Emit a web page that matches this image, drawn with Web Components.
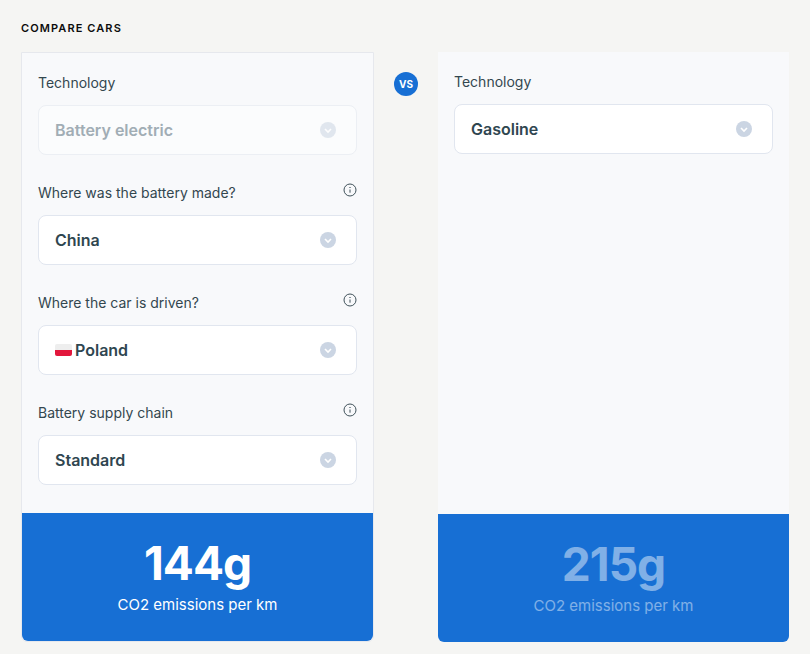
<!DOCTYPE html>
<html>
<head>
<meta charset="utf-8">
<title>Compare cars</title>
<style>
  html, body { margin: 0; background: #f5f5f3; }
  body { font-family: Inter, "Noto Sans", sans-serif; color: #2f4650; }
</style>
</head>
<body>
<compare-cars heading="COMPARE CARS">
  <car-card slot="left" bordered value="144g">
    <car-field label="Technology" value="Battery electric" disabled></car-field>
    <car-field label="Where was the battery made?" value="China" info></car-field>
    <car-field label="Where the car is driven?" value="Poland" info flag></car-field>
    <car-field label="Battery supply chain" value="Standard" info></car-field>
  </car-card>
  <car-card slot="right" value="215g" dim>
    <car-field label="Technology" value="Gasoline"></car-field>
  </car-card>
</compare-cars>

<script>
class CompareCars extends HTMLElement {
  constructor() {
    super();
    const template = document.createElement('template');
    template.innerHTML = `
      <style>
        :host { display: block; padding: 21px 21px 12px; }
        h2 {
          margin: 0 0 17px;
          font-size: 11px;
          line-height: 14px;
          font-weight: 600;
          letter-spacing: 1.1px;
          color: #0c0c0c;
        }
        .row { display: grid; grid-template-columns: 353px 64px 351px; height: 590px; }
        .mid { display: flex; justify-content: center; padding-top: 20px; }
        .vs {
          width: 24px;
          height: 24px;
          border-radius: 50%;
          background: #176fd4;
          color: #fff;
          font-size: 10px;
          font-weight: 700;
          line-height: 24px;
          text-align: center;
        }
      </style>
      <h2></h2>
      <div class="row">
        <slot name="left"></slot>
        <div class="mid"><div class="vs">VS</div></div>
        <slot name="right"></slot>
      </div>`;
    this.attachShadow({ mode: 'open' });
    this.shadowRoot.appendChild(template.content.cloneNode(true));
    this.shadowRoot.querySelector('h2').textContent = this.getAttribute('heading');
  }
}

class CarCard extends HTMLElement {
  constructor() {
    super();
    const template = document.createElement('template');
    template.innerHTML = `
      <style>
        :host {
          display: flex;
          flex-direction: column;
          box-sizing: border-box;
          background: #f8f9fb;
          border-radius: 0 0 6px 6px;
        }
        :host([bordered]) { border: 1px solid #e6e8ed; }
        .fields {
          flex: 1;
          display: flex;
          flex-direction: column;
          gap: 28px;
          padding: 20px 16px 0;
        }
        .result {
          height: 128px;
          box-sizing: border-box;
          padding-top: 22px;
          background: #176fd4;
          border-radius: 0 0 6px 6px;
          color: #fff;
          text-align: center;
        }
        :host([dim]) .result > div { opacity: .45; }
        .value { font-size: 46px; line-height: 56px; font-weight: 700; letter-spacing: -1px; }
        .caption { font-size: 15px; line-height: 20px; margin-top: 4px; }
      </style>
      <div class="fields"><slot></slot></div>
      <div class="result">
        <div class="value"></div>
        <div class="caption">CO2 emissions per km</div>
      </div>`;
    this.attachShadow({ mode: 'open' });
    this.shadowRoot.appendChild(template.content.cloneNode(true));
    this.shadowRoot.querySelector('.value').textContent = this.getAttribute('value');
  }
}

class CarField extends HTMLElement {
  constructor() {
    super();
    const template = document.createElement('template');
    template.innerHTML = `
      <style>
        :host { display: block; }
        .head { display: flex; justify-content: space-between; height: 20px; margin-bottom: 12px; }
        label { font-size: 14px; line-height: 20px; color: #33474f; }
        .info { width: 14px; height: 14px; margin-top: 0; display: block; }
        .box {
          display: flex;
          align-items: center;
          box-sizing: border-box;
          height: 50px;
          padding: 0 16px;
          background: #fff;
          border: 1px solid #e1e6ef;
          border-radius: 8px;
          font-size: 16px;
          font-weight: 600;
          color: #2f4650;
        }
        .text { flex: 1; }
        .flag { width: 17px; height: 12px; border-radius: 2px; overflow: hidden; margin-right: 3px; background: linear-gradient(#eeeeee 50%, #e2173c 50%); }
        .arrow { width: 16px; height: 16px; display: block; margin-right: 4px; }
        :host([disabled]) .box { background: #fbfcfd; border-color: #eceff4; color: #a1adb5; }
        :host([disabled]) .arrow { opacity: .55; }
      </style>
      <div class="head">
        <label></label>
        <svg class="info" viewBox="0 0 14 14" fill="none" stroke="#3f5159" stroke-width="1"><circle cx="7" cy="7" r="6"/><path d="M7 6.5v3.2"/><path d="M7 4.1v.9" stroke-width="1.2"/></svg>
      </div>
      <div class="box">
        <span class="flag"></span>
        <span class="text"></span>
        <svg class="arrow" viewBox="0 0 16 16"><circle cx="8" cy="8" r="8" fill="#cbd5e3"/><path d="M5 7l3 3 3-3" fill="none" stroke="#fff" stroke-width="1.6"/></svg>
      </div>`;
    this.attachShadow({ mode: 'open' });
    this.shadowRoot.appendChild(template.content.cloneNode(true));
    this.shadowRoot.querySelector('label').textContent = this.getAttribute('label');
    this.shadowRoot.querySelector('.text').textContent = this.getAttribute('value');
    if (!this.hasAttribute('info')) this.shadowRoot.querySelector('.info').remove();
    if (!this.hasAttribute('flag')) this.shadowRoot.querySelector('.flag').remove();
  }
}

customElements.define('car-field', CarField);
customElements.define('car-card', CarCard);
customElements.define('compare-cars', CompareCars);
</script>
</body>
</html>
